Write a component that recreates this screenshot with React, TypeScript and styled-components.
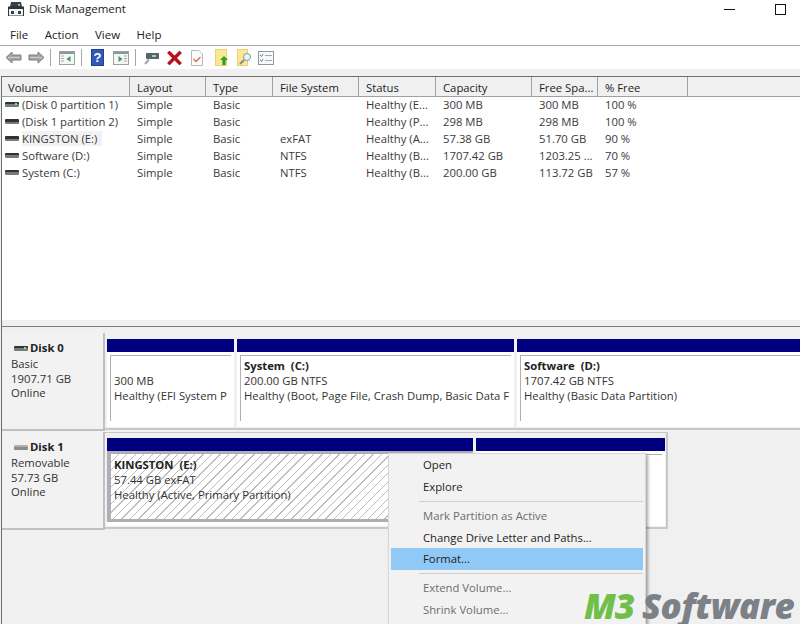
import React from 'react';
import styled, { createGlobalStyle } from 'styled-components';

const GlobalStyle = createGlobalStyle`
  html, body {
    margin: 0;
    padding: 0;
    background: #fff;
    overflow: hidden;
  }
`;

const Window = styled.div`
  position: relative;
  width: 800px;
  height: 624px;
  overflow: hidden;
  background: #f0f0f0;
  font-family: "Open Sans", "Noto Sans", sans-serif;
  font-size: 11.3px;
  color: #222;
`;

const TitleBar = styled.div`
  height: 25px;
  background: #fff;
  display: flex;
  align-items: flex-start;
  padding: 1px 0 0 8px;
  box-sizing: border-box;
  font-size: 11.5px;
  line-height: 16px;
  gap: 5px;
`;

const TitleText = styled.span`
  flex: 1;
`;

const WindowButtons = styled.div`
  display: flex;
  align-items: center;
  gap: 40px;
  padding: 2px 14px 0 0;
  height: 12px;
`;

const MinimizeGlyph = styled.div`
  width: 11px;
  height: 1px;
  background: #111;
`;

const MaximizeGlyph = styled.div`
  width: 9px;
  height: 9px;
  border: 1px solid #111;
`;

const MenuBar = styled.div`
  height: 21px;
  background: #fff;
  display: flex;
  align-items: center;
  gap: 16.5px;
  padding: 0 0 1px 10px;
  box-sizing: border-box;
  border-bottom: 1px solid #a8a8a8;
  font-size: 11.5px;
`;

const Toolbar = styled.div`
  height: 23px;
  background: #fff;
  display: flex;
  align-items: center;
  padding-left: 5px;
`;

const ToolIcon = styled.svg`
  display: block;
  flex: none;
`;

const ToolSep = styled.div<{ $before: number; $after: number }>`
  width: 1px;
  height: 17px;
  flex: none;
  background: #a8a8a8;
  margin: 0 ${(p) => p.$after}px 0 ${(p) => p.$before}px;
`;

const ToolGap = styled.div<{ $w: number }>`
  width: ${(p) => p.$w}px;
  flex: none;
`;

const ListPanel = styled.div`
  margin: 7px 0 0 1px;
  height: 244px;
  background: #fff;
  border-top: 1px solid #6e6e6e;
  border-left: 1px solid #6e6e6e;
  box-sizing: border-box;
`;

const HeaderRow = styled.div`
  display: flex;
  height: 19px;
  background: #f0f0f0;
  border-bottom: 1px solid #a0a0a0;
`;

const HeaderCell = styled.div<{ $w: number }>`
  width: ${(p) => p.$w}px;
  flex: none;
  box-sizing: border-box;
  padding-left: 7px;
  line-height: 21px;
  border-right: 1px solid #a0a0a0;

  &:first-child {
    padding-left: 6px;
  }
`;

const Row = styled.div`
  display: flex;
  height: 17px;
  line-height: 15px;
  color: #3a3a3a;
`;

const Cell = styled.div<{ $w: number }>`
  width: ${(p) => p.$w}px;
  flex: none;
  box-sizing: border-box;
  padding-left: 7px;
  white-space: nowrap;
  overflow: hidden;
`;

const VolumeCell = styled(Cell)`
  display: flex;
  align-items: flex-start;
  gap: 3px;
  padding-left: 3px;
`;

const VolumeName = styled.span<{ $selected?: boolean }>`
  display: block;
  width: 80px;
  background: ${(p) => (p.$selected ? '#f2f2f2' : 'transparent')};
`;

const DriveGlyph = styled.div<{ $light?: boolean; $led?: boolean }>`
  position: relative;
  width: 14px;
  height: 5px;
  margin-top: 5px;
  flex: none;
  background: ${(p) =>
    p.$light
      ? 'linear-gradient(#b0b0b0 0 40%, #8c8c8c 40%)'
      : 'linear-gradient(#2e3533 0 50%, #767c7a 50%)'};
  border-radius: 1px;

  &::after {
    content: '';
    display: ${(p) => (p.$led ? 'block' : 'none')};
    position: absolute;
    right: 2px;
    top: 1px;
    width: 2px;
    height: 2px;
    background: #8fe08f;
  }
`;

const Splitter = styled.div`
  height: 6px;
  margin-left: 1px;
  background: #f0f0f0;
  border-left: 1px solid #6e6e6e;
  border-bottom: 1px solid #7a7a7a;
`;

const DiskArea = styled.div`
  margin-left: 1px;
  border-left: 1px solid #6e6e6e;
  padding-top: 6px;
  height: 300px;
  box-sizing: border-box;
`;

const DiskRow = styled.div`
  display: flex;
  height: 98px;
  margin-bottom: 1px;
`;

const DiskLabel = styled.div`
  width: 103px;
  flex: none;
  box-sizing: border-box;
  padding: 8px 0 0 9px;
  background: #f2f2f2;
  border-right: 2px solid #c0c0c0;
  border-bottom: 2px solid #c0c0c0;
  line-height: 14.8px;
  color: #333;
`;

const DiskName = styled.div`
  display: flex;
  align-items: flex-start;
  gap: 2px;
  font-weight: 700;
  color: #222;
  padding: 0 0 1px 3px;
`;

const PartitionStrip = styled.div<{ $fit?: boolean }>`
  display: flex;
  gap: 3px;
  padding: 6px 0 0 2px;
  height: 97px;
  box-sizing: border-box;
  border-bottom: 2px solid #c8c8c8;
  ${(p) =>
    p.$fit
      ? 'width: 563px; border-right: 2px solid #c8c8c8; border-top: 1px solid #c8c8c8; padding-top: 5px;'
      : 'flex: 1;'}
`;

const Partition = styled.div<{ $w: number }>`
  width: ${(p) => p.$w}px;
  height: 88px;
  flex: none;
  display: flex;
  flex-direction: column;
  background: #fff;
`;

const PartitionBar = styled.div`
  height: 13px;
  flex: none;
  background: #00007f;
`;

const PartitionBody = styled.div`
  flex: 1;
  margin: 3px 3px 6px 3px;
  box-sizing: border-box;
  padding: 2px 0 0 3px;
  border-top: 1px solid #b0b0b0;
  border-left: 1px solid #b0b0b0;
  line-height: 15px;
  white-space: nowrap;
  overflow: hidden;
  color: #333;
  background: #fff;
`;

const HatchedBody = styled(PartitionBody)`
  margin: 0 0 4px 0;
  padding: 3px 0 0 3px;
  border: 3px solid #aeaeb6;
  border-left-width: 4px;
  background: repeating-linear-gradient(135deg, #fff 0, #fff 5px, #bdbdbd 5px, #bdbdbd 6px);
`;

const PartitionName = styled.div`
  font-weight: 700;
  color: #222;
  white-space: pre;
`;

const ContextMenu = styled.div`
  position: absolute;
  left: 388px;
  top: 453px;
  width: 258px;
  height: 180px;
  box-sizing: border-box;
  background: #f2f2f2;
  border: 1px solid #d8d8d8;
  box-shadow: 2px 2px 3px rgba(0, 0, 0, 0.35);
  padding: 0 2px;
`;

const MenuItem = styled.div<{ $disabled?: boolean; $active?: boolean }>`
  height: 21.6px;
  line-height: 21px;
  padding-left: 32px;
  color: ${(p) => (p.$disabled ? '#6d6d6d' : '#1c1c1c')};
  background: ${(p) => (p.$active ? '#90c8f6' : 'transparent')};
`;

const MenuSep = styled.div<{ $tight?: boolean }>`
  height: 1px;
  background: #d0d0d0;
  margin: ${(p) => (p.$tight ? '3px 0 3px 28px' : '3.5px 0 3.5px 28px')};
`;

const Watermark = styled.div`
  position: absolute;
  left: 584px;
  top: 588px;
  display: flex;
  font-family: "Open Sans", sans-serif;
  font-style: italic;
  font-weight: 800;
  font-size: 35px;
  line-height: 36px;
  white-space: nowrap;
`;

const WatermarkM3 = styled.span`
  color: #71bf4b;
  letter-spacing: -1.1px;
  margin-right: 8px;
`;

const WatermarkName = styled.span`
  color: #7b8186;
  letter-spacing: -0.5px;
`;

const columns = [128, 76, 67, 86, 77, 96, 66, 90];
const headers = ['Volume', 'Layout', 'Type', 'File System', 'Status', 'Capacity', 'Free Spa...', '% Free'];
const rows = [
  ['(Disk 0 partition 1)', 'Simple', 'Basic', '', 'Healthy (E...', '300 MB', '300 MB', '100 %'],
  ['(Disk 1 partition 2)', 'Simple', 'Basic', '', 'Healthy (P...', '298 MB', '298 MB', '100 %'],
  ['KINGSTON (E:)', 'Simple', 'Basic', 'exFAT', 'Healthy (A...', '57.38 GB', '51.70 GB', '90 %'],
  ['Software (D:)', 'Simple', 'Basic', 'NTFS', 'Healthy (B...', '1707.42 GB', '1203.25 ...', '70 %'],
  ['System (C:)', 'Simple', 'Basic', 'NTFS', 'Healthy (B...', '200.00 GB', '113.72 GB', '57 %'],
];

const Arrow = ({ flip }: { flip?: boolean }) => (
  <ToolIcon width="17" height="13" viewBox="0 0 17 13" style={flip ? { transform: 'scaleX(-1)' } : undefined}>
    <path d="M1 6.5 7 1v3h9v5H7v3z" fill="#a3a8a3" stroke="#7a7e7a" strokeWidth="1" />
    <path d="M3 6.5h12" stroke="#c8ccc8" strokeWidth="1" />
  </ToolIcon>
);

const PanelIcon = ({ flip }: { flip?: boolean }) => (
  <ToolIcon width="16" height="14" viewBox="0 0 16 14">
    <rect x="0.5" y="0.5" width="15" height="13" fill="#f6f6f6" stroke="#a0a0a0" />
    <rect x="1" y="1" width="14" height="2" fill="#8a979e" />
    <path d={flip ? 'M11 5h3M11 7.5h3M11 10h3' : 'M2 5h3M2 7.5h3M2 10h3'} stroke="#a8a8a8" />
    <path d={flip ? 'M5.5 5v6l4-3z' : 'M11.5 5v6l-4-3z'} fill="#3f9a5e" />
  </ToolIcon>
);

const App = () => (
  <Window>
    <GlobalStyle />
    <TitleBar>
      <ToolIcon width="16" height="14" viewBox="0 0 16 14" style={{ marginTop: 1 }}>
        <path d="M3 0h10l1 5H2z" fill="#39424a" />
        <rect x="10" y="2" width="2" height="1.5" fill="#9fe0a0" />
        <rect x="0.5" y="5" width="15" height="9" fill="#f4f4f4" stroke="#2f3438" />
        <rect x="0" y="5" width="16" height="2" fill="#2f3438" />
        <rect x="3" y="9" width="3" height="3" fill="#3a4046" />
        <rect x="10" y="9" width="3" height="3" fill="#3a4046" />
      </ToolIcon>
      <TitleText>Disk Management</TitleText>
      <WindowButtons>
        <MinimizeGlyph />
        <MaximizeGlyph />
      </WindowButtons>
    </TitleBar>
    <MenuBar>
      <span>File</span>
      <span>Action</span>
      <span>View</span>
      <span>Help</span>
    </MenuBar>
    <Toolbar>
      <Arrow />
      <ToolGap $w={6} />
      <Arrow flip />
      <ToolSep $before={5} $after={8} />
      <PanelIcon />
      <ToolSep $before={6} $after={9} />
      <ToolIcon width="13" height="17" viewBox="0 0 13 17">
        <rect x="0.5" y="0.5" width="12" height="16" fill="#3258b8" stroke="#22408c" />
        <text x="6.5" y="13" textAnchor="middle" fontSize="13" fontWeight="700" fill="#fff" fontFamily="Liberation Sans">?</text>
      </ToolIcon>
      <ToolGap $w={9} />
      <PanelIcon flip />
      <ToolSep $before={6} $after={8} />
      <ToolIcon width="15" height="14" viewBox="0 0 15 14">
        <rect x="2" y="2" width="13" height="6" rx="1" fill="#59636a" />
        <rect x="8" y="4" width="4" height="2" fill="#8fe08f" />
        <path d="M1 13l4-4.5" stroke="#9aa8b4" strokeWidth="2" />
      </ToolIcon>
      <ToolGap $w={8} />
      <ToolIcon width="15" height="14" viewBox="0 0 15 14">
        <path d="M2.5 2l10 10M12.5 2l-10 10" stroke="#b5121b" strokeWidth="3.4" strokeLinecap="square" />
      </ToolIcon>
      <ToolGap $w={9} />
      <ToolIcon width="12" height="16" viewBox="0 0 12 16">
        <path d="M.5.5H8L11.5 4v11.5H.5z" fill="#fbfbfb" stroke="#b8b8b8" />
        <path d="M2.5 9l2.5 2.5L9.5 7" fill="none" stroke="#d9714f" strokeWidth="1.4" />
      </ToolIcon>
      <ToolGap $w={12} />
      <ToolIcon width="13" height="17" viewBox="0 0 13 17">
        <rect x="0.5" y="0.5" width="11" height="16" fill="#fbe78f" stroke="#e8d37a" />
        <path d="M9 7l4 4h-2.4v5H7.4v-5H5z" fill="#2f9e2f" />
      </ToolIcon>
      <ToolGap $w={9} />
      <ToolIcon width="14" height="17" viewBox="0 0 14 17">
        <rect x="0.5" y="0.5" width="10" height="16" fill="#fbe78f" stroke="#e8d37a" />
        <circle cx="10" cy="8" r="3.5" fill="#eef5fa" stroke="#7d95a8" />
        <path d="M7 11l-4 4" stroke="#8a8a8a" strokeWidth="2" />
      </ToolIcon>
      <ToolGap $w={7} />
      <ToolIcon width="16" height="14" viewBox="0 0 16 14">
        <rect x="0.5" y="0.5" width="15" height="13" fill="#f8f8f8" stroke="#8c98a4" />
        <path d="M2 4l1.5 1.5L5 3M2 9l1.5 1.5L5 8" fill="none" stroke="#4a80c4" />
        <path d="M7 4.5h7M7 9.5h7" stroke="#a0a8b0" />
      </ToolIcon>
    </Toolbar>
    <ListPanel>
      <HeaderRow>
        {headers.map((h, i) => (
          <HeaderCell key={h} $w={columns[i]}>{h}</HeaderCell>
        ))}
      </HeaderRow>
      {rows.map((r, rowIndex) => (
        <Row key={r[0]}>
          {r.map((c, i) =>
            i === 0 ? (
              <VolumeCell key={i} $w={columns[i]}>
                <DriveGlyph $led={rowIndex === 0} />
                <VolumeName $selected={rowIndex === 2}>{c}</VolumeName>
              </VolumeCell>
            ) : (
              <Cell key={i} $w={columns[i]}>{c}</Cell>
            ),
          )}
        </Row>
      ))}
    </ListPanel>
    <Splitter />
    <DiskArea>
      <DiskRow>
        <DiskLabel>
          <DiskName><DriveGlyph $led />Disk 0</DiskName>
          <div>Basic</div>
          <div>1907.71 GB</div>
          <div>Online</div>
        </DiskLabel>
        <PartitionStrip>
          <Partition $w={127}>
            <PartitionBar />
            <PartitionBody>
              <div>&nbsp;</div>
              <div>300 MB</div>
              <div>Healthy (EFI System P</div>
            </PartitionBody>
          </Partition>
          <Partition $w={277}>
            <PartitionBar />
            <PartitionBody>
              <PartitionName>System  (C:)</PartitionName>
              <div>200.00 GB NTFS</div>
              <div>Healthy (Boot, Page File, Crash Dump, Basic Data F</div>
            </PartitionBody>
          </Partition>
          <Partition $w={290}>
            <PartitionBar />
            <PartitionBody>
              <PartitionName>Software  (D:)</PartitionName>
              <div>1707.42 GB NTFS</div>
              <div>Healthy (Basic Data Partition)</div>
            </PartitionBody>
          </Partition>
        </PartitionStrip>
      </DiskRow>
      <DiskRow>
        <DiskLabel>
          <DiskName><DriveGlyph $light />Disk 1</DiskName>
          <div>Removable</div>
          <div>57.73 GB</div>
          <div>Online</div>
        </DiskLabel>
        <PartitionStrip $fit>
          <Partition $w={366}>
            <PartitionBar />
            <HatchedBody>
              <PartitionName>KINGSTON  (E:)</PartitionName>
              <div>57.44 GB exFAT</div>
              <div>Healthy (Active, Primary Partition)</div>
            </HatchedBody>
          </Partition>
          <Partition $w={189}>
            <PartitionBar />
            <PartitionBody />
          </Partition>
        </PartitionStrip>
      </DiskRow>
    </DiskArea>
    <ContextMenu>
      <MenuItem>Open</MenuItem>
      <MenuItem>Explore</MenuItem>
      <MenuSep />
      <MenuItem $disabled>Mark Partition as Active</MenuItem>
      <MenuItem>Change Drive Letter and Paths...</MenuItem>
      <MenuItem $active>Format...</MenuItem>
      <MenuSep $tight />
      <MenuItem $disabled>Extend Volume...</MenuItem>
      <MenuItem $disabled>Shrink Volume...</MenuItem>
    </ContextMenu>
    <Watermark>
      <WatermarkM3>M3</WatermarkM3>
      <WatermarkName>Software</WatermarkName>
    </Watermark>
  </Window>
);

export default App;
